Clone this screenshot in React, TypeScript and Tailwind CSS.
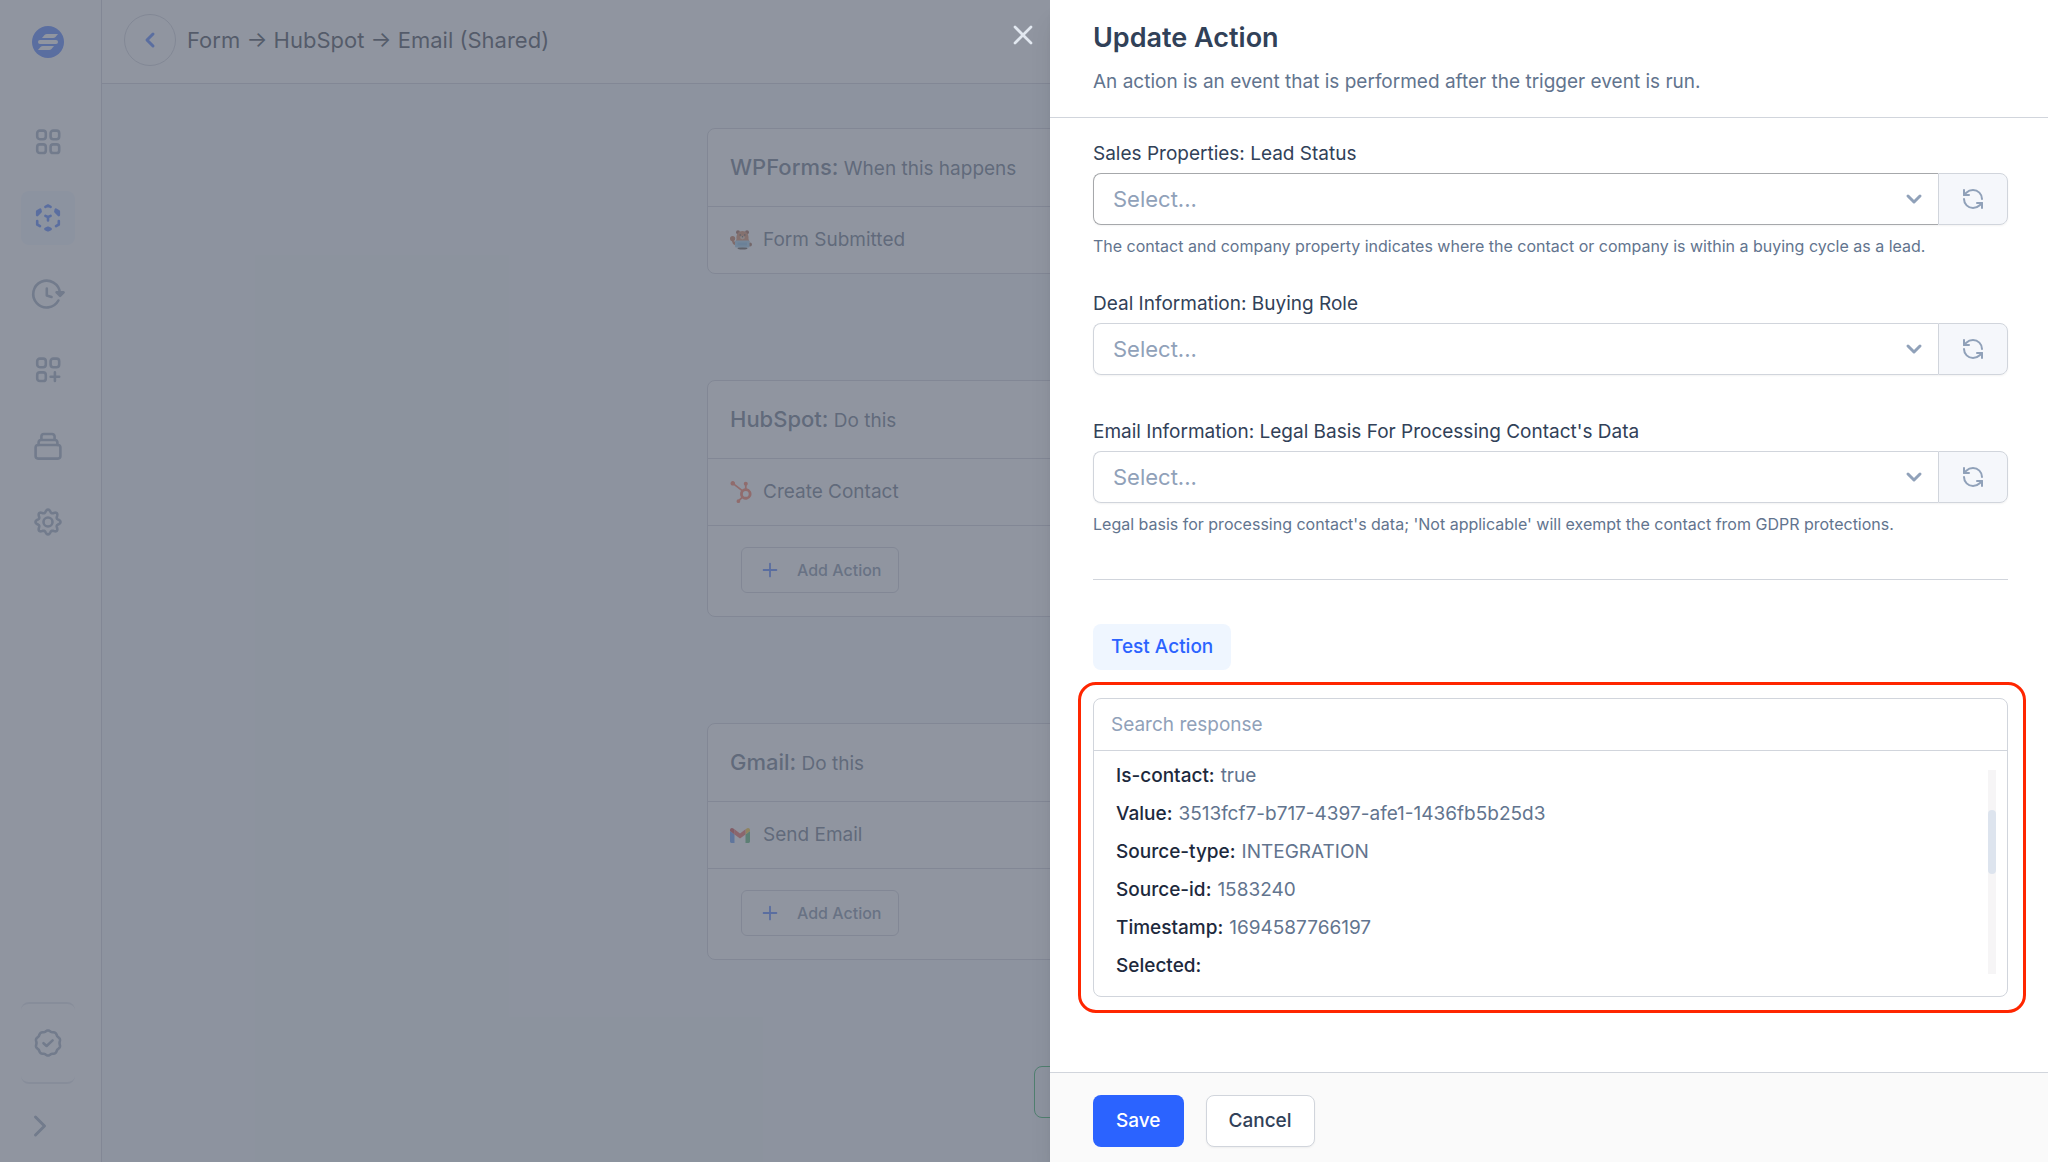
import type { ReactNode } from "react";
import { ChevronDown, ChevronLeft, ChevronRight, Plus, RefreshCcw, X } from "lucide-react";
import { SiHubspot } from "react-icons/si";

interface SelectField {
  id: string;
  label: string;
  help?: string;
  focused?: boolean;
}

interface FlowStep {
  app: string;
  hint: string;
  event: string;
  icon: ReactNode;
  canAdd?: boolean;
}

const fields: SelectField[] = [
  {
    id: "lead-status",
    label: "Sales Properties: Lead Status",
    help: "The contact and company property indicates where the contact or company is within a buying cycle as a lead.",
    focused: true,
  },
  {
    id: "buying-role",
    label: "Deal Information: Buying Role",
  },
  {
    id: "legal-basis",
    label: "Email Information: Legal Basis For Processing Contact's Data",
    help: "Legal basis for processing contact's data; 'Not applicable' will exempt the contact from GDPR protections.",
  },
];

const response = [
  { key: "Is-contact", value: "true" },
  { key: "Value", value: "3513fcf7-b717-4397-afe1-1436fb5b25d3" },
  { key: "Source-type", value: "INTEGRATION" },
  { key: "Source-id", value: "1583240" },
  { key: "Timestamp", value: "1694587766197" },
  { key: "Selected", value: "" },
];

// Closed outline whose radius swings around `base`, used for the gear and the badge
function wavyPath(lobes: number, base: number, swing: number) {
  const points: string[] = [];
  for (let deg = 0; deg < 360; deg += 3) {
    const a = (deg * Math.PI) / 180;
    const r = base + swing * Math.cos(lobes * a);
    points.push(`${(14 + r * Math.sin(a)).toFixed(2)} ${(14 - r * Math.cos(a)).toFixed(2)}`);
  }
  return `M${points.join("L")}Z`;
}

function Glyph({ children }: { children: ReactNode }) {
  return (
    <svg
      viewBox="0 0 28 28"
      className="size-7 overflow-visible"
      fill="none"
      stroke="currentColor"
      strokeWidth="2.6"
      strokeLinecap="round"
      strokeLinejoin="round"
      aria-hidden="true"
    >
      {children}
    </svg>
  );
}

function LogoIcon() {
  return (
    <svg viewBox="0 0 32 32" className="size-8" aria-hidden="true">
      <circle cx="16" cy="16" r="16" fill="#2b63ff" />
      <path d="M10 12L12.500 9Q13.500 8 15 8H26L23.500 11Q22.500 12 21 12Z" fill="#fff" />
      <rect x="6" y="14" width="20" height="4" rx="2" fill="#fff" />
      <path d="M6 24L8.500 21Q9.500 20 11 20H22L19.500 23Q18.500 24 17 24Z" fill="#fff" />
    </svg>
  );
}

function AppsIcon() {
  return (
    <Glyph>
      <rect x="3.200" y="2.600" width="8.600" height="8.600" rx="2.600" />
      <rect x="16.600" y="2.600" width="8.600" height="8.600" rx="2.600" />
      <rect x="3.200" y="16.400" width="8.600" height="8.600" rx="2.600" />
      <rect x="16.600" y="16.400" width="8.600" height="8.600" rx="2.600" />
    </Glyph>
  );
}

function WorkflowIcon() {
  return (
    <Glyph>
      <path d="M11.400 2.800L14 1.500L16.600 2.800" />
      <path d="M3.200 11V7.400L6.200 5.700L6.600 7.600Z" fill="currentColor" />
      <path d="M24.800 11V7.400L21.800 5.700L21.400 7.600Z" fill="currentColor" />
      <path d="M3.200 17V20.500L6 22.100" />
      <path d="M24.800 17V20.500L22 22.100" />
      <path d="M11.400 25L14 26.300L16.600 25L14 23.800Z" fill="currentColor" />
      <path d="M11.400 11.800L14 13.200L16.600 11.800M14 13.200V16.400" />
    </Glyph>
  );
}

function HistoryIcon() {
  return (
    <Glyph>
      <path d="M24.400 20.500A13.400 13.400 0 1 1 26 13" />
      <path d="M22.600 12.400L26.100 15.800L29.600 12.400Z" fill="currentColor" />
      <path d="M12.800 8.500V15.500L17.500 17" />
    </Glyph>
  );
}

function AddAppIcon() {
  return (
    <Glyph>
      <rect x="3.200" y="2.600" width="8.600" height="8.600" rx="2.600" />
      <rect x="16.600" y="2.600" width="8.600" height="8.600" rx="2.600" />
      <rect x="3.200" y="16.400" width="8.600" height="8.600" rx="2.600" />
      <path d="M20.900 16.400V25M16.600 20.700H25.200" />
    </Glyph>
  );
}

function StackIcon() {
  return (
    <Glyph>
      <rect x="1.600" y="13" width="24.800" height="13.600" rx="2.500" />
      <path d="M4.600 13V10.500A2.500 2.500 0 0 1 7.100 8H20.900A2.500 2.500 0 0 1 23.400 10.500V13" />
      <path d="M7.400 7.600V4.500A2.500 2.500 0 0 1 9.900 2H18.100A2.500 2.500 0 0 1 20.600 4.500V7.600" />
    </Glyph>
  );
}

function GearIcon() {
  return (
    <Glyph>
      <path d={wavyPath(8, 11, 1.5)} />
      <circle cx="14" cy="14" r="4.500" />
    </Glyph>
  );
}

function BadgeIcon() {
  return (
    <Glyph>
      <path d={wavyPath(10, 12, 0.5)} />
      <path d="M9.500 14.200L12.600 17L18.600 11.400" />
    </Glyph>
  );
}

function BearIcon() {
  return (
    <svg viewBox="0 0 22 20" className="h-5 w-[22px]" aria-hidden="true">
      <ellipse cx="12.500" cy="18.300" rx="5" ry="1.200" fill="#3f3026" />
      <circle cx="2.600" cy="8.600" r="2.600" fill="#b85a2d" />
      <path d="M1.500 10L6.500 12.500V16L3 14Z" fill="#b85a2d" />
      <circle cx="20" cy="14.500" r="2" fill="#8a4a2b" />
      <circle cx="8" cy="2.300" r="2" fill="#8a3f22" />
      <circle cx="17" cy="2.300" r="2" fill="#8a3f22" />
      <path d="M6.500 9C6 4 8.500 1 12.500 1S19 4 18.500 9L19.500 12H5.500Z" fill="#d0703c" />
      <ellipse cx="12.500" cy="7.600" rx="2.400" ry="1.800" fill="#e8bd98" />
      <circle cx="10.200" cy="5" r="0.800" fill="#2b2b2b" />
      <circle cx="14.800" cy="5" r="0.800" fill="#2b2b2b" />
      <circle cx="12.500" cy="6.800" r="0.800" fill="#2b2b2b" />
      <rect x="5" y="10.500" width="14.500" height="7" rx="1" fill="#8cc4e8" />
      <rect x="7.500" y="12.500" width="9.500" height="3" fill="#6bb0de" />
    </svg>
  );
}

function GmailIcon() {
  return (
    <svg viewBox="0 0 20 15" className="h-[15px] w-5" aria-hidden="true">
      <path d="M0 3V13.600C0 14.400 0.600 15 1.400 15H4.500V6.400Z" fill="#4285f4" />
      <path d="M20 3V13.600C20 14.400 19.400 15 18.600 15H15.500V6.400Z" fill="#34a853" />
      <path d="M15.500 1.400V6.400L20 3V2C20 0.200 18 -0.600 16.600 0.500Z" fill="#fbbc04" />
      <path d="M4.500 6.400V1.300L10 5.400L15.500 1.300V6.400L10 10.600Z" fill="#ea4335" />
      <path d="M0 2V3L4.500 6.400V1.400L3.400 0.500C2 -0.600 0 0.200 0 2Z" fill="#c5221f" />
    </svg>
  );
}

const steps: FlowStep[] = [
  { app: "WPForms", hint: "When this happens", event: "Form Submitted", icon: <BearIcon /> },
  {
    app: "HubSpot",
    hint: "Do this",
    event: "Create Contact",
    icon: <SiHubspot className="size-[22px] text-[#ff5c35]" />,
    canAdd: true,
  },
  { app: "Gmail", hint: "Do this", event: "Send Email", icon: <GmailIcon />, canAdd: true },
];

const navItems = [
  { name: "Dashboard", icon: <AppsIcon /> },
  { name: "Workflows", icon: <WorkflowIcon />, active: true },
  { name: "History", icon: <HistoryIcon /> },
  { name: "Integrations", icon: <AddAppIcon /> },
  { name: "Collections", icon: <StackIcon /> },
  { name: "Settings", icon: <GearIcon /> },
];

function Sidebar() {
  return (
    <aside className="flex w-[102px] shrink-0 flex-col border-r border-[#c6c8d2] bg-white pr-[6px] text-[#8797ae]">
      <a href="#home" aria-label="Home" className="mt-[26px] mb-[57px] self-center">
        <LogoIcon />
      </a>
      <nav className="flex flex-col items-center gap-[22px]">
        {navItems.map((item) => (
          <a
            key={item.name}
            href={`#${item.name.toLowerCase()}`}
            aria-label={item.name}
            className={`flex size-[54px] items-center justify-center rounded-lg ${
              item.active ? "bg-[#eef5ff] text-[#2b63ff]" : ""
            }`}
          >
            {item.icon}
          </a>
        ))}
      </nav>
      <div className="mt-auto flex h-[82px] w-[54px] items-center justify-center self-center rounded-lg border-y-2 border-[#dcdfe8]">
        <a href="#status" aria-label="Status">
          <BadgeIcon />
        </a>
      </div>
      <button type="button" aria-label="Expand menu" className="mt-6 mb-[18px] ml-[22px] size-9">
        <ChevronRight className="size-9" strokeWidth={2} />
      </button>
    </aside>
  );
}

function StepCard({ step }: { step: FlowStep }) {
  return (
    <section className="w-[736px] rounded-lg border border-[#c6c8d2] bg-white text-slate-600">
      <h2 className="flex h-[78px] items-center border-b border-[#c6c8d2] px-[22px] text-[19px]">
        <span>
          <span className="text-[22px] font-medium">{step.app}:</span> {step.hint}
        </span>
      </h2>
      <div className="flex h-[66px] items-center px-[22px] text-[19px]">
        <span className="flex w-[33px] items-center">{step.icon}</span>
        {step.event}
      </div>
      {step.canAdd && (
        <div className="border-t border-[#c6c8d2] px-[33px] pt-[21px] pb-[23px]">
          <button
            type="button"
            className="flex h-[46px] items-center rounded-md border border-[#c6c8d2] px-[17px] text-base font-medium text-slate-500"
          >
            <Plus className="mr-[16px] size-[22px] text-[#2b63ff]" strokeWidth={2} />
            Add Action
          </button>
        </div>
      )}
    </section>
  );
}

function Field({ field }: { field: SelectField }) {
  return (
    <div className={field.help ? "mb-[35px]" : "mb-[45px]"}>
      <label htmlFor={field.id} className="mb-[7px] block text-[19px]/6 text-slate-700">
        {field.label}
      </label>
      <div className="flex h-[52px] rounded-lg shadow-xs">
        <div className="relative flex flex-1">
          <select
            id={field.id}
            className={`flex-1 appearance-none rounded-l-lg border border-r-0 bg-white px-[19px] text-[22px] text-slate-400 ${
              field.focused ? "border-[#a6a8ab]" : "border-gray-300"
            }`}
          >
            <option>Select...</option>
          </select>
          <ChevronDown
            className="pointer-events-none absolute top-1/2 right-3 size-6 -translate-y-1/2 text-slate-400"
            strokeWidth={3}
          />
        </div>
        <button
          type="button"
          aria-label={`Refresh ${field.label}`}
          className="flex w-[70px] items-center justify-center rounded-r-lg border border-gray-300 bg-[#f5f7fb] text-slate-400"
        >
          <RefreshCcw className="size-6" strokeWidth={2} />
        </button>
      </div>
      {field.help && <p className="mt-[10px] text-base/[22px] text-slate-500">{field.help}</p>}
    </div>
  );
}

function ResponsePanel() {
  return (
    <div className="mt-3 -mr-[18px] -ml-[15px] rounded-[18px] border-3 border-[#ff2600] py-[13px] pr-[15px] pl-3">
      <div className="rounded-lg border border-gray-300">
        <input
          type="text"
          aria-label="Search response"
          placeholder="Search response"
          className="block h-[52px] w-full border-b border-gray-300 px-[17px] text-[19px] outline-none placeholder:text-slate-400"
        />
        <div className="flex justify-between pt-[6px] pb-[11px] pr-[11px] pl-[22px]">
          <dl className="text-[19px]/[38px] text-slate-500">
            {response.map((row) => (
              <div key={row.key} className="flex gap-[6px]">
                <dt className="font-medium text-slate-800">{row.key}:</dt>
                <dd>{row.value}</dd>
              </div>
            ))}
          </dl>
          <div className="mt-[13px] mb-[11px] w-2 bg-[#f6f5f6] pt-10">
            <div className="h-16 rounded-full bg-[#dde4ee]" />
          </div>
        </div>
      </div>
    </div>
  );
}

export default function App() {
  return (
    <div className="relative flex h-screen overflow-hidden bg-slate-100 font-['Inter',sans-serif]">
      <Sidebar />
      <div className="flex flex-1 flex-col">
        <header className="flex h-[84px] shrink-0 items-center gap-[11px] border-b border-[#c6c8d2] bg-white px-[22px] pb-[3px]">
          <button
            type="button"
            aria-label="Back"
            className="flex size-[52px] items-center justify-center rounded-full border border-[#c6c8d2] text-[#2b63ff]"
          >
            <ChevronLeft className="size-6" strokeWidth={3} />
          </button>
          <h1 className="text-[22px] text-gray-900">Form → HubSpot → Email (Shared)</h1>
        </header>
        <main className="flex flex-col items-center gap-[106px] pt-11">
          {steps.map((step) => (
            <StepCard key={step.app} step={step} />
          ))}
          <button
            type="button"
            aria-label="Add step"
            className="h-[52px] w-[83px] shrink-0 rounded-lg border border-green-600"
          />
        </main>
      </div>

      {/* Backdrop and drawer sit over the workflow */}
      <div className="absolute inset-0 flex justify-end bg-[#6b7280]/75">
        <button type="button" aria-label="Close" className="mt-[19px] mr-[11px] size-8 text-slate-200">
          <X className="size-8" strokeWidth={2} />
        </button>
        <div
          role="dialog"
          aria-label="Update Action"
          className="flex w-[998px] flex-col bg-white shadow-xl"
        >
          <div className="border-b border-gray-300 px-[43px] pt-5 pb-[21px]">
            <h2 className="text-[27px]/9 font-semibold text-slate-700">Update Action</h2>
            <p className="mt-3 text-[19px]/7 text-slate-500">
              An action is an event that is performed after the trigger event is run.
            </p>
          </div>
          <div className="flex-1 overflow-hidden pt-6 pr-10 pl-[43px]">
            {fields.map((field) => (
              <Field key={field.id} field={field} />
            ))}
            <hr className="mt-11 mb-11 border-gray-300" />
            <button
              type="button"
              className="block h-[46px] rounded-lg bg-[#eff6ff] px-[18px] text-[19px] font-medium text-[#2b63ff]"
            >
              Test Action
            </button>
            <ResponsePanel />
          </div>
          <div className="flex gap-[22px] border-t border-gray-300 bg-[#fafafa] px-[43px] pt-[22px] pb-[15px]">
            <button
              type="button"
              className="h-[52px] rounded-lg bg-[#2b63ff] px-[23px] text-[19px] font-medium text-white"
            >
              Save
            </button>
            <button
              type="button"
              className="h-[52px] rounded-lg border border-gray-300 bg-white px-[22px] text-[19px] font-medium text-slate-700 shadow-xs"
            >
              Cancel
            </button>
          </div>
        </div>
      </div>
    </div>
  );
}
